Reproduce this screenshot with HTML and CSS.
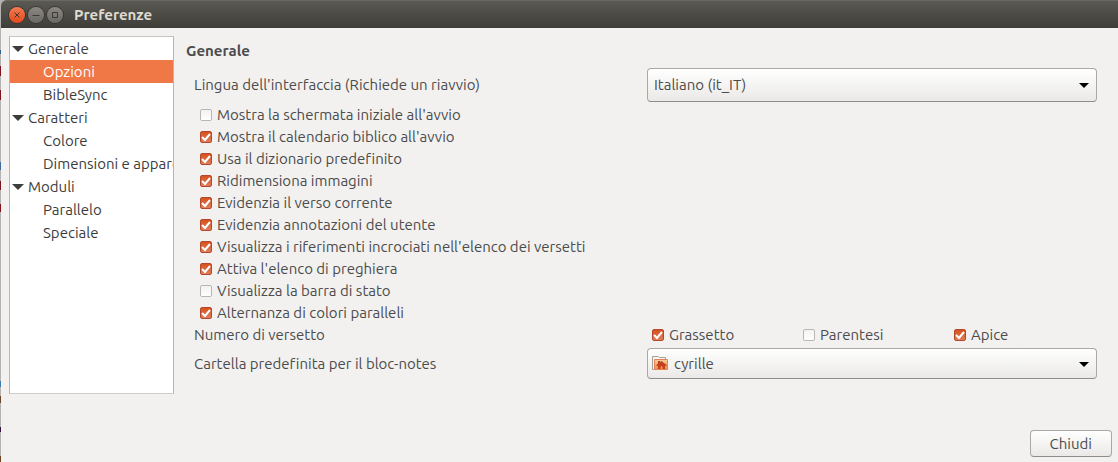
FILE: index.html
```html
<!DOCTYPE html>
<html lang="it">
<head>
<meta charset="utf-8">
<title>Preferenze</title>
<link rel="stylesheet" href="styles.css">
</head>
<body>
<div class="window">
  <header class="titlebar">
    <div class="window-buttons">
      <button class="win-btn close" type="button" aria-label="Chiudi finestra"><svg viewBox="0 0 16 16"><path d="M5.5 5.5l5 5M10.5 5.5l-5 5"/></svg></button>
      <button class="win-btn" type="button" aria-label="Riduci"><svg viewBox="0 0 16 16"><path d="M4.5 8.5h7"/></svg></button>
      <button class="win-btn" type="button" aria-label="Ingrandisci"><svg viewBox="0 0 16 16"><path d="M5.5 5.5h5v5h-5z"/></svg></button>
    </div>
    <h1 class="title">Preferenze</h1>
  </header>
  <main class="content">
    <nav class="tree" aria-label="Sezioni">
      <div class="node parent"><svg class="expander" viewBox="0 0 12 6"><path d="M0 0h12l-6 6z"/></svg>Generale</div>
      <a class="node selected" href="#opzioni">Opzioni</a>
      <a class="node" href="#biblesync">BibleSync</a>
      <div class="node parent"><svg class="expander" viewBox="0 0 12 6"><path d="M0 0h12l-6 6z"/></svg>Caratteri</div>
      <a class="node" href="#colore">Colore</a>
      <a class="node" href="#dimensioni">Dimensioni e apparenza</a>
      <div class="node parent"><svg class="expander" viewBox="0 0 12 6"><path d="M0 0h12l-6 6z"/></svg>Moduli</div>
      <a class="node" href="#parallelo">Parallelo</a>
      <a class="node" href="#speciale">Speciale</a>
    </nav>
    <section class="panel" id="opzioni">
      <h2 class="heading">Generale</h2>
      <div class="row language">
        <label for="lang">Lingua dell'interfaccia (Richiede un riavvio)</label>
        <div class="combo">
          <select class="select tall" id="lang"><option>Italiano (it_IT)</option></select>
          <svg class="arrow" viewBox="0 0 10 5"><path d="M0 0h10l-5 5z"/></svg>
        </div>
      </div>
      <div class="options">
        <label class="check"><input type="checkbox">Mostra la schermata iniziale all'avvio</label>
        <label class="check"><input type="checkbox" checked>Mostra il calendario biblico all'avvio</label>
        <label class="check"><input type="checkbox" checked>Usa il dizionario predefinito</label>
        <label class="check"><input type="checkbox" checked>Ridimensiona immagini</label>
        <label class="check"><input type="checkbox" checked>Evidenzia il verso corrente</label>
        <label class="check"><input type="checkbox" checked>Evidenzia annotazioni del utente</label>
        <label class="check"><input type="checkbox" checked>Visualizza i riferimenti incrociati nell'elenco dei versetti</label>
        <label class="check"><input type="checkbox" checked>Attiva l'elenco di preghiera</label>
        <label class="check"><input type="checkbox">Visualizza la barra di stato</label>
        <label class="check"><input type="checkbox" checked>Alternanza di colori paralleli</label>
      </div>
      <div class="row">
        <span id="verse">Numero di versetto</span>
        <div class="triple" role="group" aria-labelledby="verse">
          <label class="check"><input type="checkbox" checked>Grassetto</label>
          <label class="check"><input type="checkbox">Parentesi</label>
          <label class="check"><input type="checkbox" checked>Apice</label>
        </div>
      </div>
      <div class="row folder-row">
        <label for="folder">Cartella predefinita per il bloc-notes</label>
        <div class="combo">
          <select class="select with-icon" id="folder"><option>cyrille</option></select>
          <svg class="folder" viewBox="0 0 16 14">
            <defs><linearGradient id="fold" x1="0" y1="0" x2="0" y2="1"><stop offset="0" stop-color="#f6cf9c"/><stop offset="1" stop-color="#ee8a4c"/></linearGradient></defs>
            <path d="M2 13.500H.5V.5h6l1 1h6v2" fill="#f6f5f3" stroke="#a3a09c"/>
            <path d="M2.500 3.500h13v10h-13z" fill="url(#fold)" stroke="#e0845a"/>
            <path d="M6 5h2v1l1.500-1L14.500 9v1H13v3h-2.500v-2.500h-2V13H6v-3H4.500V9L6 7.500z" fill="#c5401b"/>
          </svg>
          <svg class="arrow" viewBox="0 0 10 5"><path d="M0 0h10l-5 5z"/></svg>
        </div>
      </div>
    </section>
  </main>
  <footer class="actions"><button class="button" type="button">Chiudi</button></footer>
</div>
</body>
</html>
```
FILE: styles.css
```css
* { box-sizing: border-box; }

body {
  margin: 0;
  background: linear-gradient(#b5b3b1 0 50px, #2f5f8a 50px 54px, #b5b3b1 54px 66px, #7c1420 66px 76px, #b5b3b1 76px 90px, #7c1420 90px 100px, #b5b3b1 100px 162px, #3d6d98 162px 170px, #b5b3b1 170px 181px, #7c1420 181px 190px, #b5b3b1 190px 204px, #7c1420 204px 212px, #b5b3b1 212px 381px, #3b7ba8 381px 387px, #b5b3b1 387px 396px, #6d4526 396px 403px, #b5b3b1 403px 427px, #33143a 427px 432px, #b5b3b1 432px 456px, #6d4526 456px);
  color: #4c4c4c;
  font: 15px/22px Ubuntu, "Noto Sans", sans-serif;
  font-variant-ligatures: none;
}

.window {
  display: flex;
  flex-direction: column;
  min-height: 100vh;
  margin-left: 1px;
  background: #f2f1f0;
  border-top-left-radius: 6px;
}

.titlebar {
  display: flex;
  align-items: center;
  gap: 11px;
  height: 28px;
  padding: 1px 8px 0;
  border-top-left-radius: 6px;
  background: linear-gradient(#5b5a53, #3e3d39);
  box-shadow: inset 0 1px #6a6962;
}

.window-buttons { display: flex; gap: 3px; }

.win-btn {
  width: 16px;
  height: 16px;
  padding: 0;
  border: 0;
  border-radius: 50%;
  background: linear-gradient(#8a8881, #6b6963);
  box-shadow: 0 0 0 1px #383733;
}

.win-btn.close { background: linear-gradient(#f37b53, #e4491b); }

.win-btn svg {
  display: block;
  width: 16px;
  height: 16px;
  fill: none;
  stroke: #3a3935;
}

.title {
  margin: 0;
  color: #dfdbd2;
  font-size: 15px;
  font-weight: 700;
}

.content {
  display: flex;
  flex: 1;
  gap: 12px;
  padding: 8px 21px 0 8px;
}

.tree {
  flex: none;
  width: 165px;
  overflow: hidden;
  border: 1px solid #b8b6b3;
  border-top-color: #c6c4c2;
  border-bottom-color: #cfcdcb;
  background: #fff;
}

.node {
  display: block;
  padding-left: 33px;
  color: #3c3c3c;
  line-height: 23px;
  text-decoration: none;
  white-space: nowrap;
}

.node.parent {
  display: flex;
  align-items: center;
  gap: 4px;
  padding-left: 2px;
}

.node.selected { background: #f07746; color: #fff; }

.expander { width: 12px; height: 6px; fill: #3c3c3c; }

.panel { flex: 1; min-width: 0; }

.heading {
  margin: 4px 0 6px;
  font-size: 15px;
  line-height: 22px;
}

.row {
  display: grid;
  grid-template-columns: 1fr 1fr;
  gap: 3px;
  align-items: center;
  padding-left: 8px;
}

.language { margin-bottom: 2px; }

.folder-row { margin-top: 2px; }

.combo { position: relative; }

.select {
  display: block;
  width: 100%;
  height: 31px;
  padding: 0 24px 0 6px;
  appearance: none;
  border: 1px solid #aaa8a5;
  border-bottom-color: #8f8d8a;
  border-radius: 4px;
  background: linear-gradient(#fff, #eae9e7);
  color: #4c4c4c;
  font: inherit;
}

.select.tall { height: 34px; }

.select.with-icon { padding-left: 26px; }

.arrow {
  position: absolute;
  top: 50%;
  right: 8px;
  width: 10px;
  height: 5px;
  margin-top: -2px;
  fill: #000;
  pointer-events: none;
}

.folder {
  position: absolute;
  top: 8px;
  left: 5px;
  width: 16px;
  height: 14px;
  pointer-events: none;
}

.options {
  display: flex;
  flex-direction: column;
  align-items: flex-start;
  padding-left: 14px;
}

.check {
  display: flex;
  align-items: center;
  gap: 5px;
  white-space: nowrap;
}

.check input {
  width: 12px;
  height: 12px;
  margin: 0;
  appearance: none;
  border: 1px solid #b9b7b4;
  border-radius: 2px;
  background: linear-gradient(#f3f2f1, #fff);
}

.check input:checked {
  border-color: #b5482a;
  background: url("data:image/svg+xml,%3Csvg xmlns='http://www.w3.org/2000/svg' viewBox='0 0 10 10'%3E%3Cpath d='M1 5l3 3L9 2' fill='none' stroke='white' stroke-width='2'/%3E%3C/svg%3E") center / 10px 10px, linear-gradient(#d5521f, #e07e5b);
}

.triple {
  display: grid;
  grid-template-columns: repeat(3, 1fr);
  gap: 8px;
  padding-left: 5px;
}

.actions {
  display: flex;
  justify-content: flex-end;
  padding: 36px 6px 5px;
}

.button {
  height: 27px;
  padding: 0 19px;
  border: 1px solid #aaa8a5;
  border-bottom-color: #8f8d8a;
  border-radius: 4px;
  background: linear-gradient(#fff, #eae9e7);
  color: #4c4c4c;
  font: inherit;
}
```
